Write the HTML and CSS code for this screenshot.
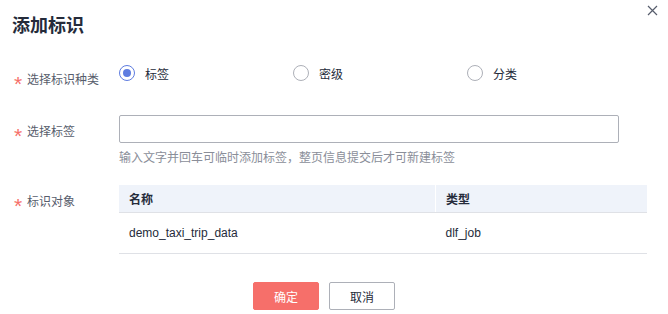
FILE: index.html
```html
<!DOCTYPE html>
<html lang="zh-CN">
<head>
    <meta charset="UTF-8">
    <title>添加标识</title>
    <link rel="stylesheet" href="styles.css">
</head>
<body>
    <div class="dialog">
        <div class="dialog-header">
            <h2>添加标识</h2>
            <span class="close" title="关闭">
                <svg width="11" height="11" viewBox="0 0 11 11">
                    <path d="M1 1 L10 10 M10 1 L1 10" stroke="#575d6c" stroke-width="1.2" fill="none"/>
                </svg>
            </span>
        </div>

        <div class="form-row row-radio">
            <label class="form-label"><span class="req">*</span>选择标识种类</label>
            <div class="radio-group">
                <span class="radio checked"><i></i>标签</span>
                <span class="radio"><i></i>密级</span>
                <span class="radio"><i></i>分类</span>
            </div>
        </div>

        <div class="form-row row-input">
            <label class="form-label"><span class="req">*</span>选择标签</label>
            <div class="control">
                <input class="text-input" type="text">
                <div class="hint">输入文字并回车可临时添加标签，整页信息提交后才可新建标签</div>
            </div>
        </div>

        <div class="form-row row-table">
            <label class="form-label"><span class="req">*</span>标识对象</label>
            <table class="obj-table">
                <thead>
                    <tr><th class="col-name">名称</th><th>类型</th></tr>
                </thead>
                <tbody>
                    <tr><td>demo_taxi_trip_data</td><td>dlf_job</td></tr>
                </tbody>
            </table>
        </div>

        <div class="footer">
            <button class="btn btn-primary">确定</button>
            <button class="btn btn-default">取消</button>
        </div>
    </div>
</body>
</html>
```

FILE: styles.css
```css
body {
    margin: 0;
    background: #fff;
    font-family: "Liberation Sans", "Noto Sans CJK SC", sans-serif;
    color: #252b3a;
}

.dialog {
    width: 668px;
    height: 314px;
    position: relative;
}

.dialog-header {
    padding: 14px 0 0 12px;
    height: 51px;
    box-sizing: border-box;
}

.dialog-header h2 {
    margin: 0;
    font-size: 18px;
    line-height: 24px;
    font-weight: bold;
    color: #252b3a;
}

.close {
    position: absolute;
    top: 5px;
    right: 10px;
    line-height: 0;
    cursor: pointer;
}

.form-row {
    display: flex;
    align-items: flex-start;
}

.form-label {
    width: 105px;
    padding-left: 14px;
    font-size: 12px;
    line-height: 16px;
    color: #575d6c;
    padding-top: 9px;
}

.req {
    display: inline-block;
    width: 13px;
    color: #f66f6a;
    font-size: 21px;
    line-height: 0;
    position: relative;
    top: 7px;
}

.row-radio {
    margin-top: 14px;
    height: 16px;
}

.row-radio .form-label {
    padding-top: 7px;
}

.radio-group {
    display: flex;
}

.radio {
    display: flex;
    align-items: center;
    width: 174px;
    height: 16px;
    font-size: 12px;
    color: #252b3a;
}

.radio i {
    width: 14px;
    height: 14px;
    border: 1px solid #adb0b8;
    border-radius: 50%;
    margin-right: 10px;
    position: relative;
}

.radio.checked i {
    border-color: #5e7ce0;
}

.radio.checked i::after {
    content: "";
    position: absolute;
    left: 3px;
    top: 3px;
    width: 8px;
    height: 8px;
    border-radius: 50%;
    background: #5e7ce0;
}

.row-input {
    margin-top: 34px;
}

.text-input {
    display: block;
    width: 500px;
    height: 28px;
    box-sizing: border-box;
    border: 1px solid #adb0b8;
    border-radius: 2px;
    margin: 0;
    outline: none;
}

.hint {
    margin-top: 7px;
    font-size: 12px;
    line-height: 16px;
    color: #8a8e99;
}

.row-table {
    margin-top: 19px;
}

.obj-table {
    width: 528px;
    border-collapse: collapse;
    font-size: 12px;
}

.obj-table th {
    background: #eff3fa;
    height: 27px;
    padding: 0 10px;
    text-align: left;
    font-weight: bold;
    color: #252b3a;
    border-bottom: 1px solid #dfe1e6;
}

.obj-table th.col-name {
    width: 296px;
    border-right: 1px solid #fff;
}

.obj-table td {
    height: 40px;
    padding: 0 10px;
    border-bottom: 1px solid #dfe1e6;
    color: #252b3a;
}

.footer {
    display: flex;
    justify-content: center;
    gap: 10px;
    margin-top: 28px;
    padding-right: 20px;
}

.btn {
    width: 66px;
    height: 28px;
    border-radius: 2px;
    font-size: 12px;
    font-family: inherit;
    cursor: pointer;
    padding: 0;
}

.btn-primary {
    background: #f66f6a;
    border: 1px solid #f66f6a;
    color: #fff;
}

.btn-default {
    background: #fff;
    border: 1px solid #adb0b8;
    color: #252b3a;
}
```
